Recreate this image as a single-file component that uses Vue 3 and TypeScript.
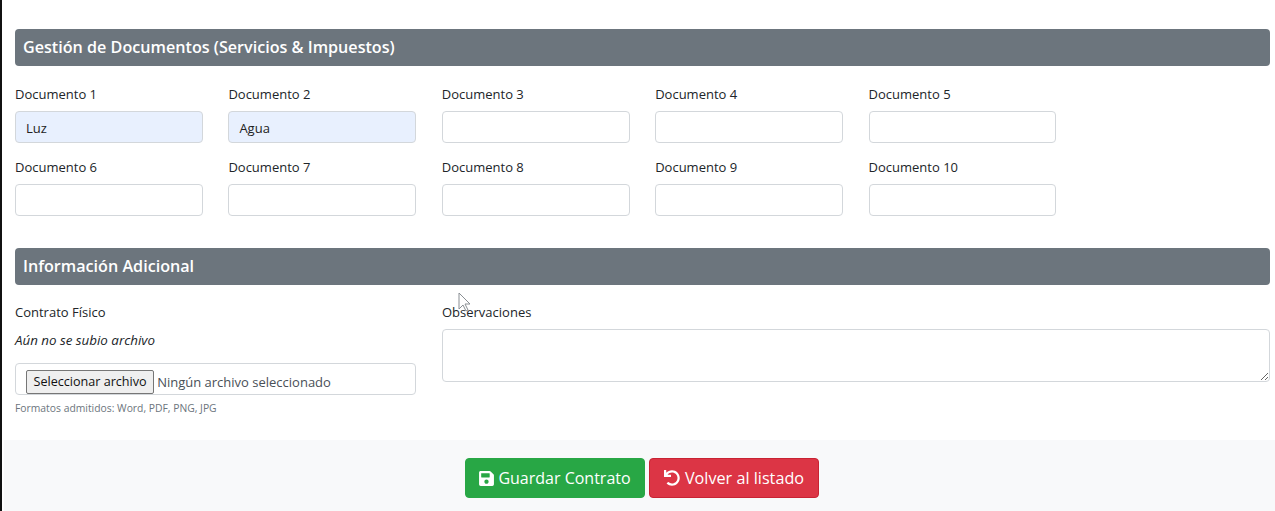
<script setup lang="ts">
const rows: { label: string; value: string }[][] = [
  [
    { label: 'Documento 1', value: 'Luz' },
    { label: 'Documento 2', value: 'Agua' },
    { label: 'Documento 3', value: '' },
    { label: 'Documento 4', value: '' },
    { label: 'Documento 5', value: '' },
  ],
  [
    { label: 'Documento 6', value: '' },
    { label: 'Documento 7', value: '' },
    { label: 'Documento 8', value: '' },
    { label: 'Documento 9', value: '' },
    { label: 'Documento 10', value: '' },
  ],
]
const fields = rows.flat()
</script>

<template>
  <div class="page">
    <div class="content">
      <h5 class="bar">Gestión de Documentos (Servicios &amp; Impuestos)</h5>
      <div class="docs">
        <div v-for="f in fields" :key="f.label" class="field">
          <label>{{ f.label }}</label>
          <input class="ctl" :class="{ filled: f.value }" type="text" :value="f.value" />
        </div>
      </div>
      <h5 class="bar second">Información Adicional</h5>
      <div class="extra">
        <div class="left">
          <label>Contrato Físico</label>
          <p class="none">Aún no se subio archivo</p>
          <div class="ctl file">
            <span class="file-btn">Seleccionar archivo</span>
            <span class="file-name">Ningún archivo seleccionado</span>
          </div>
          <small>Formatos admitidos: Word, PDF, PNG, JPG</small>
        </div>
        <div class="right">
          <label>Observaciones</label>
          <textarea class="ctl area"></textarea>
        </div>
      </div>
    </div>
    <div class="footer">
      <button class="btn green" type="button">
        <svg viewBox="0 0 448 512" width="15" height="17" fill="#fff"><path d="M433.9 129.9l-83.9-83.9A48 48 0 0 0 316.1 32H48C21.5 32 0 53.5 0 80v352c0 26.5 21.5 48 48 48h352c26.5 0 48-21.5 48-48V163.9a48 48 0 0 0-14.1-34zM224 416c-35.3 0-64-28.7-64-64 0-35.3 28.7-64 64-64s64 28.7 64 64c0 35.3-28.7 64-64 64zm96-304.5V212c0 6.6-5.4 12-12 12H76c-6.6 0-12-5.4-12-12V108c0-6.6 5.4-12 12-12h228.5c3.2 0 6.2 1.3 8.5 3.5l3.5 3.5c2.2 2.2 3.5 5.3 3.5 8.5z"/></svg>
        Guardar Contrato
      </button>
      <button class="btn red" type="button">
        <svg viewBox="0 0 512 512" width="16" height="16" fill="#fff"><path d="M212.3 224.3H12c-6.6 0-12-5.4-12-12V12C0 5.4 5.4 0 12 0h48c6.6 0 12 5.4 12 12v78.1C117.8 39.3 184.3 7.5 258.2 8c136.9 1 246.4 111.6 245.8 248.5C503.4 393.1 392.5 504 256 504c-64 0-122.3-24.3-166.3-64.2-5.1-4.6-5.3-12.6-.5-17.4l34-34c4.5-4.5 11.7-4.7 16.4-.5C170.8 415.3 211.6 432 256 432c97.3 0 176-78.7 176-176 0-97.3-78.7-176-176-176-58.5 0-110.3 28.5-142.3 72.3h98.3c6.6 0 12 5.4 12 12v48c0 6.6-5.4 12-12 12z"/></svg>
        Volver al listado
      </button>
    </div>
    <svg class="cursor" viewBox="0 0 14 22" width="14" height="22"><path d="M1 1v16l4-4 3 6 2-1-3-6h5z" fill="#fff" fill-opacity=".6" stroke="#8a8f94" stroke-width="1"/></svg>
  </div>
</template>

<style>
html, body { margin: 0; background: #fff; }
</style>

<style scoped>
.page {
  position: relative;
  width: 1275px;
  height: 511px;
  overflow: hidden;
  box-sizing: border-box;
  border-left: 2px solid #111;
  display: flex;
  flex-direction: column;
  font-family: "Open Sans", "Noto Sans", sans-serif;
  font-size: 13px;
  color: #212529;
  background: #fff;
}
.content {
  flex: 1;
  padding: 29px 5px 0 13px;
}
.bar {
  margin: 0;
  height: 37px;
  box-sizing: border-box;
  padding: 0 0 2px 8px;
  display: flex;
  align-items: center;
  background: #6c757d;
  color: #fff;
  border-radius: 4px;
  font-size: 16.15px;
  font-weight: 600;
}
.second { margin-top: 32px; }
.docs {
  display: grid;
  grid-template-columns: repeat(5, 187.8px);
  column-gap: 25.6px;
  row-gap: 15px;
  margin-top: 19px;
}
.field label, .left label, .right label {
  display: block;
  height: 26px;
  line-height: 18px;
}
.ctl {
  display: block;
  box-sizing: border-box;
  width: 100%;
  height: 32px;
  padding: 1px 10px 0;
  border: 1px solid #d3d7db;
  border-radius: 4px;
  background: #fff;
  color: #495057;
  font: inherit;
  outline: none;
}
.filled { background: #e8f0fe; color: #222; }
.extra {
  display: grid;
  grid-template-columns: 401px 828px;
  column-gap: 26px;
  margin-top: 18px;
}
.none {
  margin: 0;
  height: 34px;
  line-height: 18px;
  font-style: italic;
  font-size: 13.35px;
  padding-top: 2px;
  box-sizing: border-box;
}
.file {
  padding: 0 0 0 10px;
  display: flex;
  align-items: center;
  gap: 3px;
}
.file-btn {
  box-sizing: border-box;
  height: 24px;
  line-height: 21px;
  padding: 0 6.5px;
  background: #efefef;
  border: 1px solid #767676;
  border-radius: 2px;
  color: #111;
  font-size: 12.6px;
  white-space: nowrap;
  margin-top: 6px;
}
.file-name { color: #495057; padding-top: 6px; }
small {
  display: block;
  margin-top: 5px;
  font-size: 10.35px;
  line-height: 16px;
  color: #6c757d;
}
.area {
  height: 53px;
  resize: vertical;
}
.footer {
  height: 71px;
  box-sizing: border-box;
  margin-left: 2px;
  background: #f8f9fa;
  display: flex;
  gap: 4px;
  padding: 18px 0 0 461px;
  position: relative;
}
.btn {
  height: 40px;
  box-sizing: border-box;
  border-radius: 4px;
  border: 1px solid transparent;
  color: #fff;
  font-family: inherit;
  font-size: 16px;
  display: flex;
  align-items: center;
  justify-content: center;
  gap: 4px;
  padding: 0;
}
.green { width: 180px; background: #28a745; border-color: #28a745; }
.red { width: 170px; background: #dc3545; border-color: #c82333; font-size: 16.2px; gap: 5px; }
.cursor {
  position: absolute;
  left: 456px;
  top: 292px;
}
</style>
